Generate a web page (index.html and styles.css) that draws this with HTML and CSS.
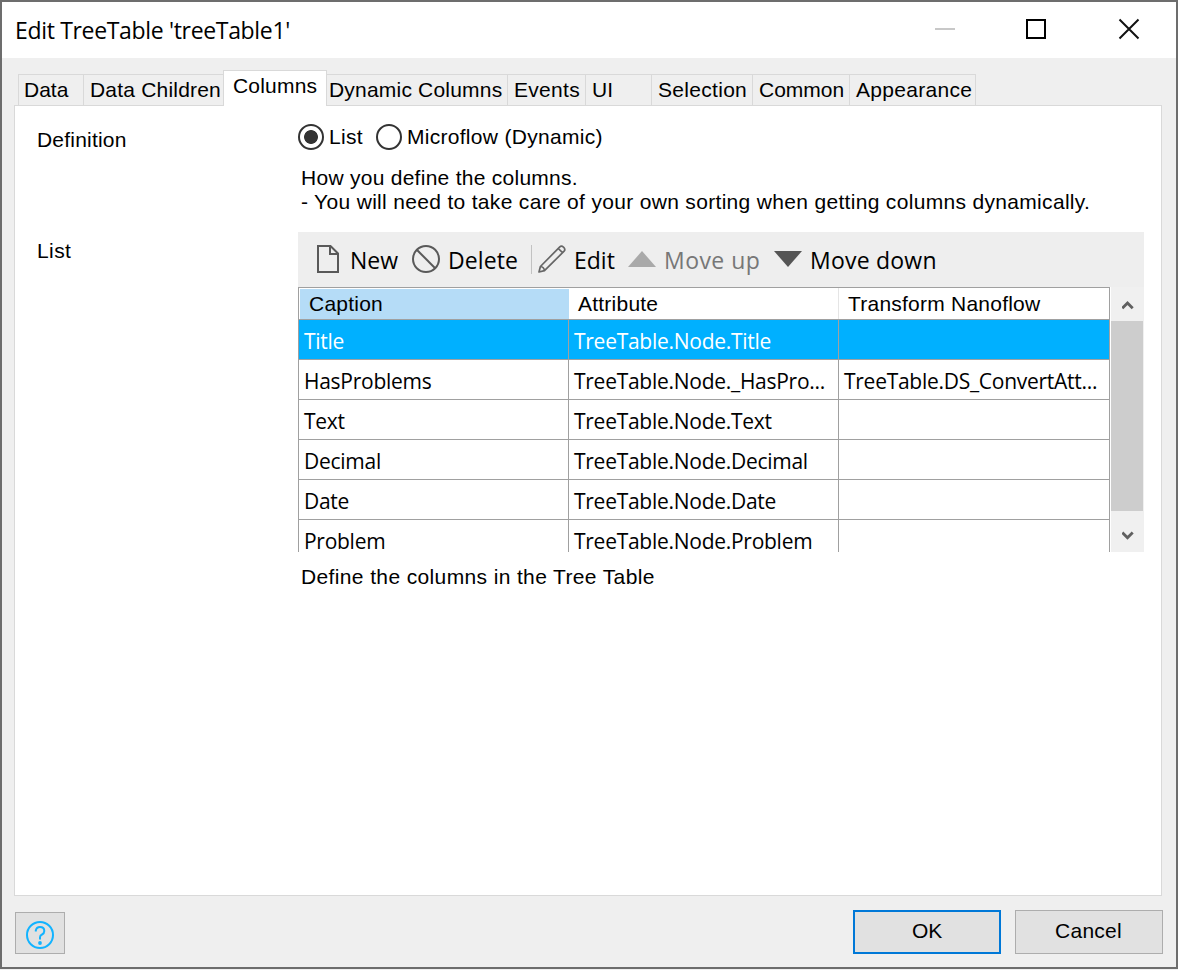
FILE: index.html
```html
<!DOCTYPE html>
<html lang="en">
<head>
<meta charset="utf-8">
<title>Edit TreeTable</title>
<link rel="stylesheet" href="styles.css">
</head>
<body>
<div class="dialog">
  <header class="titlebar">
    <h1 class="title">Edit TreeTable 'treeTable1'</h1>
    <svg class="window-controls" width="206" height="22" viewBox="0 0 206 22" fill="none">
      <path d="M1 11H21" stroke="#c8c8c8" stroke-width="2"/>
      <rect x="93" y="2" width="18" height="18" stroke="#000" stroke-width="2"/>
      <path d="M185.500 1.500L204.500 20.500M204.500 1.500L185.500 20.500" stroke="#111" stroke-width="2"/>
    </svg>
  </header>
  <nav class="tabs">
    <div class="tab tab-data">Data</div>
    <div class="tab tab-children">Data Children</div>
    <div class="tab tab-columns active">Columns</div>
    <div class="tab tab-dynamic">Dynamic Columns</div>
    <div class="tab tab-events">Events</div>
    <div class="tab tab-ui">UI</div>
    <div class="tab tab-selection">Selection</div>
    <div class="tab tab-common">Common</div>
    <div class="tab tab-appearance">Appearance</div>
  </nav>
  <main class="panel">
    <section class="field field-definition">
      <div class="label">Definition</div>
      <div class="content">
        <div class="radios">
          <span class="radio checked"></span><span class="radio-label">List</span>
          <span class="radio"></span><span class="radio-label">Microflow (Dynamic)</span>
        </div>
        <p class="help">How you define the columns.<br><span class="help-long">- You will need to take care of your own sorting when getting columns dynamically.</span></p>
      </div>
    </section>
    <section class="field field-list">
      <div class="label">List</div>
      <div class="content">
        <div class="toolbar">
          <svg class="icon icon-new" width="24" height="30" viewBox="0 0 24 30" fill="none" stroke="#595959" stroke-width="2"><path d="M3 2H15.500L23 9.500V28H3ZM15 2V10H23"/></svg>
          <span class="tool tool-new">New</span>
          <svg class="icon icon-delete" width="30" height="30" viewBox="0 0 30 30" fill="none" stroke="#595959" stroke-width="2"><circle cx="15" cy="15" r="13"/><path d="M5.800 5.800L24.200 24.200"/></svg>
          <span class="tool tool-delete">Delete</span>
          <span class="separator"></span>
          <svg class="icon icon-edit" width="30" height="30" viewBox="0 0 30 30" fill="none" stroke="#666" stroke-width="1.700" stroke-linejoin="round"><path d="M2 28L3.400 22.500L22.800 2.900Q24.400 1.300 26.700 3.300Q28.700 5.600 27.100 7.200L7.500 26.600ZM3.400 22.500Q7 23 7.500 26.600M21.300 4.500L25.500 8.700"/></svg>
          <span class="tool tool-edit">Edit</span>
          <svg class="icon icon-up" width="28" height="16" viewBox="0 0 28 16"><path d="M14 0L28 16H0Z" fill="#a9a9a9"/></svg>
          <span class="tool tool-up">Move up</span>
          <svg class="icon icon-down" width="28" height="16" viewBox="0 0 28 16"><path d="M0 0H28L14 16Z" fill="#555"/></svg>
          <span class="tool tool-down">Move down</span>
        </div>
        <div class="grid-area">
          <div class="table">
            <div class="row head"><div class="sorted">Caption</div><div>Attribute</div><div>Transform Nanoflow</div></div>
            <div class="row selected"><div>Title</div><div>TreeTable.Node.Title</div><div></div></div>
            <div class="row"><div>HasProblems</div><div>TreeTable.Node._HasPro...</div><div>TreeTable.DS_ConvertAtt...</div></div>
            <div class="row"><div>Text</div><div>TreeTable.Node.Text</div><div></div></div>
            <div class="row"><div>Decimal</div><div>TreeTable.Node.Decimal</div><div></div></div>
            <div class="row"><div>Date</div><div>TreeTable.Node.Date</div><div></div></div>
            <div class="row last"><div>Problem</div><div>TreeTable.Node.Problem</div><div></div></div>
          </div>
          <div class="scrollbar">
            <svg class="arrow" width="12" height="10" viewBox="0 0 12 10" fill="none" stroke="#606060" stroke-width="2.800"><path d="M.300 8.200L5.500 3L10.700 8.200"/></svg>
            <div class="thumb"></div>
            <svg class="arrow arrow-down" width="12" height="10" viewBox="0 0 12 10" fill="none" stroke="#606060" stroke-width="2.800"><path d="M.300 1.600L5.500 6.800L10.700 1.600"/></svg>
          </div>
        </div>
        <p class="help help-list">Define the columns in the Tree Table</p>
      </div>
    </section>
  </main>
  <footer class="footer">
    <button class="help-button">
      <svg width="30" height="30" viewBox="0 0 30 30" fill="none" stroke="#12b3ff" stroke-width="2"><circle cx="15" cy="15" r="13"/><path d="M10.800 11.500V10.500Q11.500 7 15 7Q19.300 7 19.300 11Q19.300 13.300 17 14.500Q15 15.300 15 17.200V19.500"/><circle cx="15" cy="23" r="1.900" fill="#12b3ff" stroke="none"/></svg>
    </button>
    <button class="button primary">OK</button>
    <button class="button">Cancel</button>
  </footer>
</div>
</body>
</html>
```
FILE: styles.css
```css
* { box-sizing: border-box; }
body {
  margin: 0;
  background: #f0f0f0;
  color: #000;
  font: 21px/24px "Liberation Sans", Arial, sans-serif;
  letter-spacing: .3px;
}
svg { display: block; flex: none; }
h1, p { margin: 0; font-weight: normal; }
.dialog {
  display: flex;
  flex-direction: column;
  width: 1178px;
  height: 969px;
  border: 2px solid #6d6d6d;
  background: #efefef;
}
.titlebar {
  display: flex;
  align-items: center;
  justify-content: space-between;
  height: 56px;
  padding: 0 36px 2px 13px;
  background: #fff;
}
.title { font: 23px/30px "Open Sans", "Noto Sans", sans-serif; letter-spacing: -.33px; padding-top: 2px; }
.tabs {
  display: flex;
  align-items: flex-end;
  height: 48px;
  padding: 0 16px 1px;
  margin-bottom: -1px;
  z-index: 1;
  letter-spacing: .2px;
}
.tab {
  height: 31px;
  padding-left: 6px;
  border: 1px solid #d9d9d9;
  border-width: 1px 0 0 1px;
  line-height: 30px;
  white-space: nowrap;
}
.tab-data { width: 65px; padding-left: 5px; letter-spacing: 0; }
.tab-children { width: 140px; }
.tab-columns { width: 104px; }
.tab-dynamic { width: 180px; padding-left: 2px; border-left: 0; }
.tab-events { width: 78px; letter-spacing: .3px; }
.tab-ui { width: 66px; }
.tab-selection { width: 101px; letter-spacing: .3px; }
.tab-common { width: 97px; letter-spacing: 0; }
.tab-appearance { width: 127px; border-right-width: 1px; letter-spacing: .3px; }
.tab.active {
  height: 36px;
  margin-bottom: -1px;
  padding-left: 9px;
  border-right-width: 1px;
  background: #fff;
}
.panel {
  width: 1148px;
  height: 791px;
  margin-left: 12px;
  border: 1px solid #d9d9d9;
  background: #fff;
}
.field { display: flex; padding-left: 22px; }
.label { width: 261px; letter-spacing: .2px; }
.content { width: 846px; }
.field-definition { padding-top: 17px; height: 126px; }
.field-definition .label { padding-top: 5px; }
.radios { display: flex; align-items: center; height: 28px; }
.radio {
  width: 26px;
  height: 26px;
  margin-right: 5px;
  border: 2px solid #333;
  border-radius: 50%;
}
.radio.checked { background: radial-gradient(circle, #333 6.500px, #fff 7.300px); }
.radio-label { margin-right: 13px; }
.help { padding: 15px 0 0 3px; white-space: nowrap; letter-spacing: .27px; }
.help-long { letter-spacing: .32px; }
.field-list .label { padding-top: 7px; letter-spacing: .4px; }
.toolbar {
  display: flex;
  align-items: center;
  height: 55px;
  padding: 0 0 2px 17px;
  background: #eee;
  font: 23px/32px "Open Sans", "Noto Sans", sans-serif;
  letter-spacing: 0;
  white-space: nowrap;
}
.tool { padding-top: 2px; }
.tool-new { width: 69px; margin-left: 11px; }
.icon-delete { margin-left: -8px; }
.tool-delete { width: 83px; margin-left: 7px; letter-spacing: .1px; }
.separator { width: 1px; height: 29px; margin-top: 2px; background: #c2c2c2; }
.icon-edit { margin-left: 5px; }
.tool-edit { width: 47px; margin-left: 7px; }
.icon-up { margin-left: 7px; }
.tool-up { width: 104px; margin-left: 8px; color: #777; letter-spacing: .45px; }
.icon-down { margin-left: 6px; }
.tool-down { margin-left: 8px; letter-spacing: .22px; }
.grid-area { display: flex; height: 265px; }
.table {
  width: 812px;
  height: 265px;
  border: 1px solid #a0a0a0;
  border-bottom: 0;
}
.row {
  display: grid;
  grid-template-columns: 270px 270px 270px;
  height: 40px;
  font: 21px/42px "Open Sans", "Noto Sans", sans-serif;
  letter-spacing: -.27px;
  border-bottom: 1px solid #a0a0a0;
  white-space: nowrap;
}
.row > div { padding-left: 5px; border-right: 1px solid #a0a0a0; }
.row > div:last-child { border-right: 0; }
.row.head { height: 32px; font: 21px/31px "Liberation Sans", Arial, sans-serif; letter-spacing: .23px; }
.row.head > div { padding-left: 9px; border-right-color: #e5e5e5; }
.row.head .sorted { background: #b5dcf7; border-right: 0; border-top: 1px solid #fff; border-left: 1px solid #fff; line-height: 29px; }
.row.selected { background: #00b0ff; color: #fff; }
.row.last { grid-template-rows: 32px; height: 32px; border-bottom: 0; }
.scrollbar {
  display: flex;
  flex-direction: column;
  align-items: center;
  width: 34px;
  padding: 13px 0 0;
  background: #f0f0f0;
  border-left: 1px solid #fff;
}
.thumb { width: 32px; height: 190px; margin: 11px 1px 0 0; align-self: flex-end; background: #cdcdcd; }
.arrow-down { margin-top: 20px; }
.help-list { padding-top: 13px; letter-spacing: .37px; }
.footer { display: flex; padding: 14px 13px 0; }
.help-button {
  display: flex;
  align-items: center;
  justify-content: center;
  width: 50px;
  height: 42px;
  margin: 2px auto 0 0;
  padding: 3px 0 0;
  border: 1px solid #adadad;
  background: #e1e1e1;
}
.button {
  width: 148px;
  height: 44px;
  margin-left: 14px;
  padding: 0 1px 2px 0;
  border: 1px solid #adadad;
  background: #e1e1e1;
  color: #000;
  font: inherit;
  letter-spacing: .25px;
}
.button.primary { border: 2px solid #0078d7; padding-right: 0; letter-spacing: -.1px; }
```
